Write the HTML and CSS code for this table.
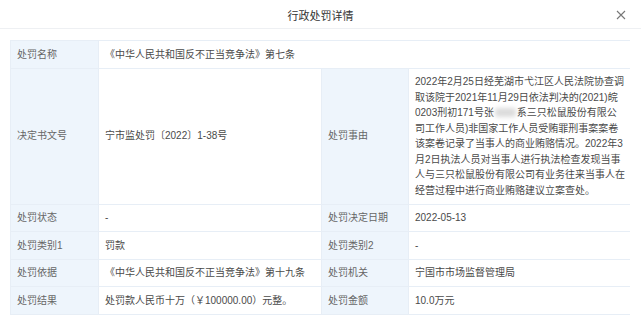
FILE: index.html
```html
<!DOCTYPE html>
<html lang="zh-CN">
<head>
<meta charset="utf-8">
<title>行政处罚详情</title>
<link rel="stylesheet" href="styles.css">
</head>
<body>
<div class="dialog">
  <div class="dialog-header">
    <span class="dialog-title">行政处罚详情</span>
    <button class="dialog-close" aria-label="关闭">
      <svg width="10" height="10" viewBox="0 0 10 10"><path d="M1 1 L9 9 M9 1 L1 9" stroke="#777" stroke-width="1.1" fill="none"/></svg>
    </button>
  </div>
  <div class="detail-grid">
    <div class="label">处罚名称</div>
    <div class="value span3">《中华人民共和国反不正当竞争法》第七条</div>

    <div class="label">决定书文号</div>
    <div class="value">宁市监处罚〔2022〕1-38号</div>
    <div class="label">处罚事由</div>
    <div class="value"><p class="para masked">2022年2月25日经芜湖市弋江区人民法院协查调取该院于2021年11月29日依法判决的(2021)皖0203刑初171号张&#12288;&#12288;&nbsp;系三只松鼠股份有限公司工作人员)非国家工作人员受贿罪刑事案案卷该案卷记录了当事人的商业贿赂情况。2022年3月2日执法人员对当事人进行执法检查发现当事人与三只松鼠股份有限公司有业务往来当事人在经营过程中进行商业贿赂建议立案查处。</p></div>

    <div class="label">处罚状态</div>
    <div class="value">-</div>
    <div class="label">处罚决定日期</div>
    <div class="value">2022-05-13</div>

    <div class="label">处罚类别1</div>
    <div class="value">罚款</div>
    <div class="label">处罚类别2</div>
    <div class="value">-</div>

    <div class="label">处罚依据</div>
    <div class="value">《中华人民共和国反不正当竞争法》第十九条</div>
    <div class="label">处罚机关</div>
    <div class="value">宁国市市场监督管理局</div>

    <div class="label">处罚结果</div>
    <div class="value">处罚款人民币十万（￥100000.00）元整。</div>
    <div class="label">处罚金额</div>
    <div class="value">10.0万元</div>
  </div>
</div>
</body>
</html>
```

FILE: styles.css
```css
html, body {
  margin: 0;
  padding: 0;
  background: #fff;
}
body {
  font-family: "Liberation Sans", "Noto Sans CJK SC", sans-serif;
  font-size: 10px;
  color: #444;
}
.dialog {
  width: 641px;
}
.dialog-header {
  position: relative;
  height: 28px;
  border-bottom: 1px solid #eef0f3;
  display: flex;
  align-items: center;
  justify-content: center;
}
.dialog-title {
  font-size: 11px;
  color: #333;
  padding-top: 1px;
}
.dialog-close {
  position: absolute;
  right: 15px;
  top: 10px;
  width: 10px;
  height: 10px;
  padding: 0;
  border: 0;
  background: none;
  display: block;
}
.dialog-close svg {
  display: block;
}
.detail-grid {
  margin: 11px 10px 0 10px;
  display: grid;
  grid-template-columns: 87px 222px 86px 222px;
  gap: 1px;
  background: #e7eef6;
  border: 1px solid #e7eef6;
  width: 620px;
  box-sizing: border-box;
}
.label, .value {
  padding: 5.5px 6px;
  line-height: 15.5px;
  display: flex;
  align-items: center;
  min-width: 0;
}
.label {
  background: #eef5fc;
  color: #666;
}
.value {
  background: #fff;
  color: #4a4a4a;
}
.para {
  margin: 0;
  width: 210.5px;
}
.masked {
  position: relative;
}
.masked::after {
  content: "";
  position: absolute;
  left: 80px;
  top: 34px;
  width: 21px;
  height: 9px;
  background: #dcdcdc;
  border-radius: 3px;
  filter: blur(2px);
}
.span3 {
  grid-column: span 3;
}
```
